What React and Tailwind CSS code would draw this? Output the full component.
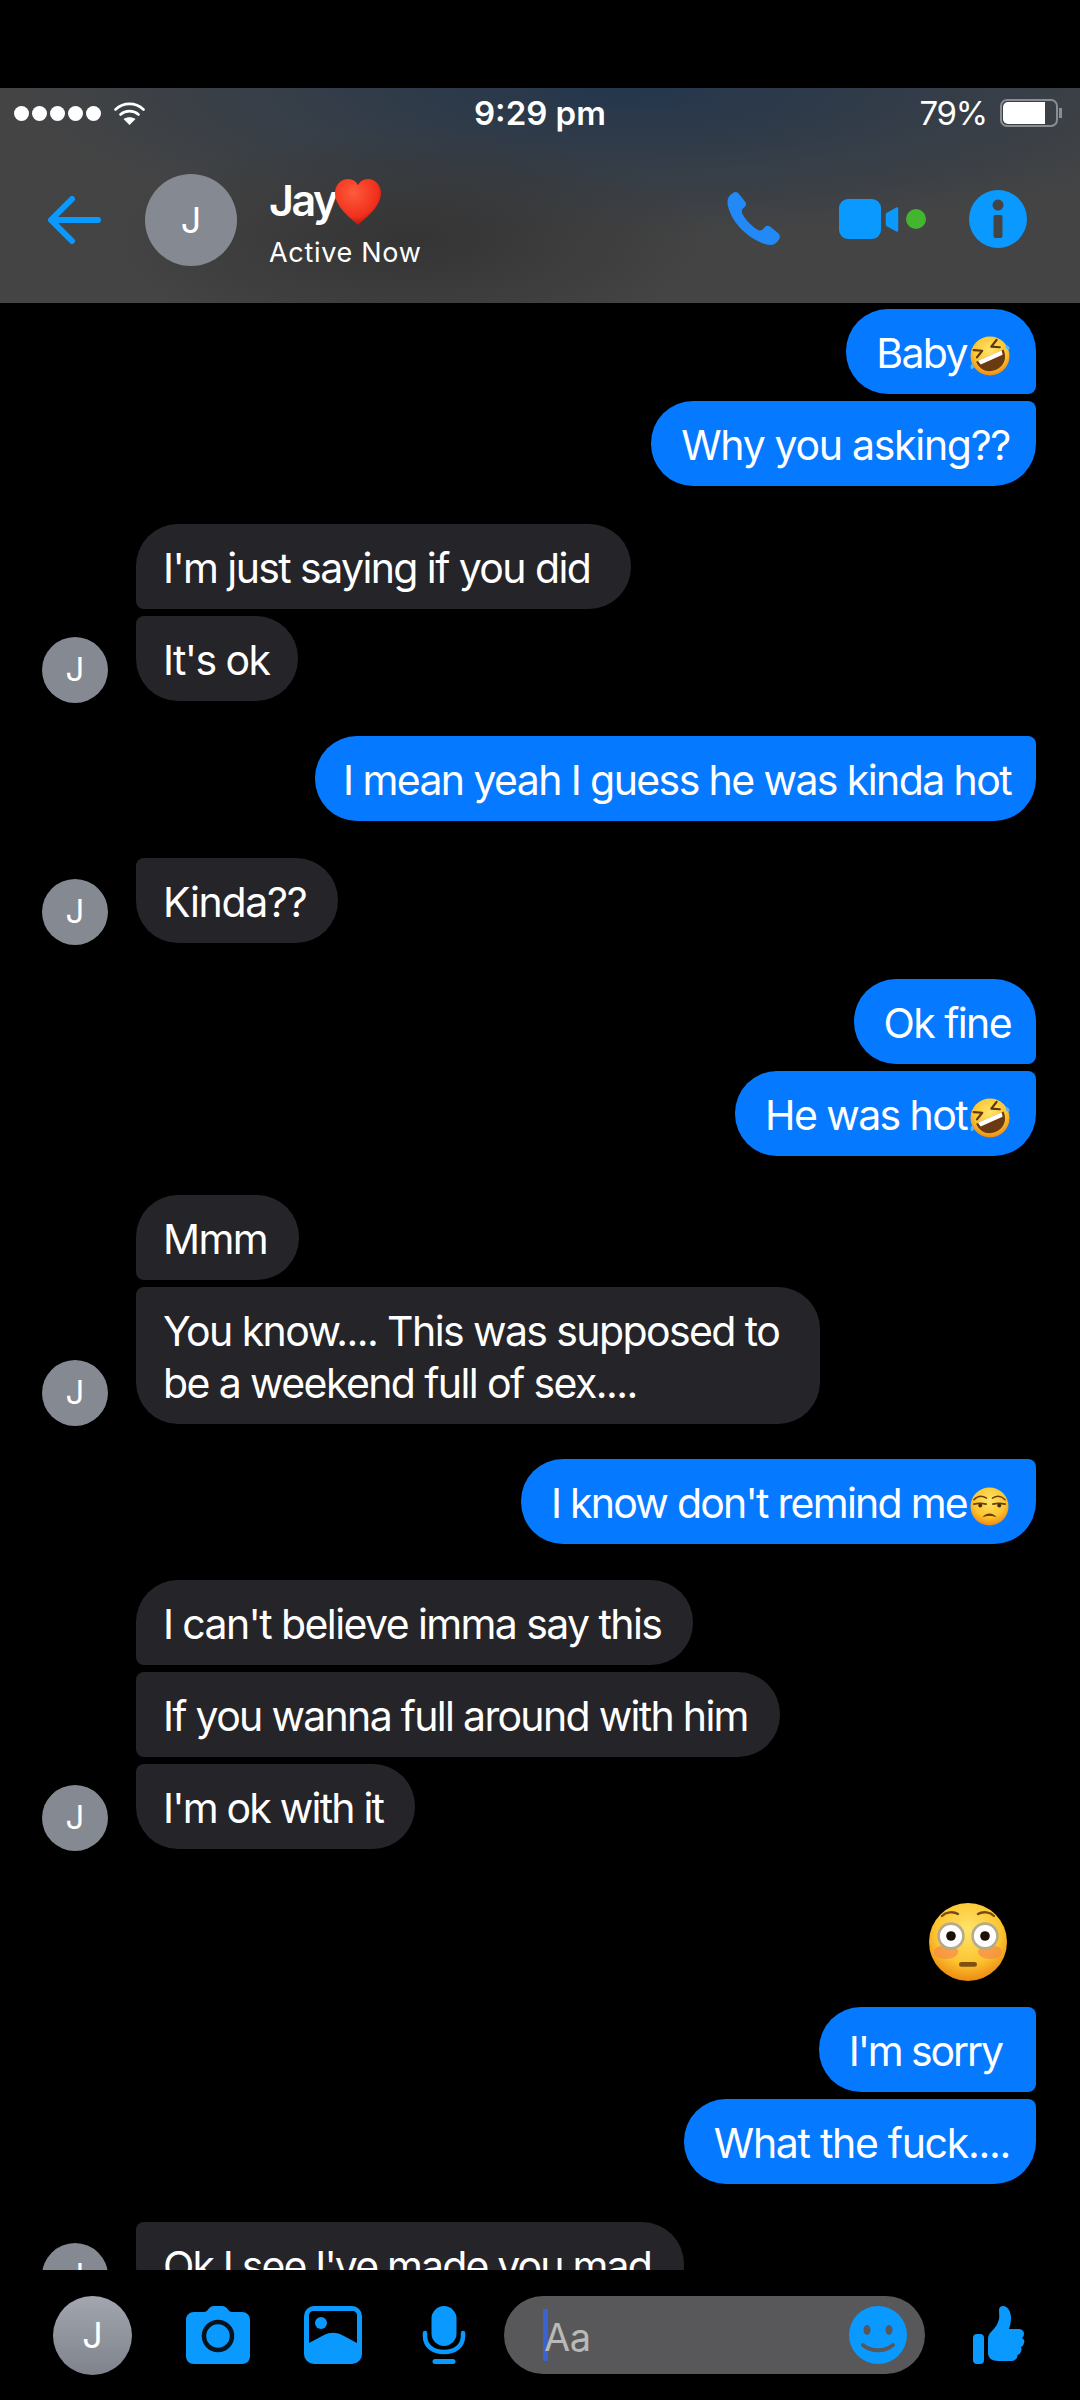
import React from 'react';

const font = "font-['Inter','Liberation_Sans',sans-serif]";

// Emoji are drawn since no colour emoji font is installed
const Face = ({ id, children, size = 40, className = '' }) => (
  <svg viewBox="0 0 40 40" width={size} height={size} className={`inline-block shrink-0 ${className}`}>
    <defs>
      <radialGradient id={id} cx="50%" cy="35%" r="65%">
        <stop offset="0%" stopColor="#ffe46b" />
        <stop offset="65%" stopColor="#fcc52f" />
        <stop offset="100%" stopColor="#ee8a12" />
      </radialGradient>
    </defs>
    <circle cx="20" cy="20" r="19.500" fill={`url(#${id})`} />
    {children}
  </svg>
);

const Rofl = ({ id }) => (
  <Face id={id} className="align-[-8px] ml-[3px]">
    <g transform="rotate(-24 20 20)">
      <path d="M5 19.500h30c0 10-7 15.500-15 15.500S5 29.500 5 19.500z" fill="#6b3a10" />
      <path d="M7 19.500h26l-1 4.500H8z" fill="#fff" />
      <path d="M7.500 8l7.500 4-7.500 4M32.500 8l-7.500 4 7.500 4" fill="none" stroke="#5f3610" strokeWidth="2.200" strokeLinecap="round" strokeLinejoin="round" />
    </g>
    <path d="M36 9c3 .5 4 2.500 3.500 4.500-2.500.5-4.500-1-3.500-4.500zM3 27c-2.500 1.500-3 4-2 6 2.500 0 4.500-2 2-6z" fill="#5fb4ee" />
  </Face>
);

const Unamused = ({ id }) => (
  <Face id={id} size={39} className="align-[-8px] ml-[3px]">
    <path d="M4 13c4-4 9-4 13-1.500M23 11.500c4-2.500 9-2.500 13 1.500" fill="none" stroke="#6b3c0e" strokeWidth="1.500" strokeLinecap="round" />
    <path d="M4 17.500c4-1 8-1 12.500 0M23.500 17.500c4-1 8-1 12.500 0" fill="none" stroke="#6b3c0e" strokeWidth="1.800" strokeLinecap="round" />
    <circle cx="10.500" cy="19" r="2" fill="#4b2a0c" />
    <circle cx="30" cy="19" r="2" fill="#4b2a0c" />
    <path d="M13 31c3-5 11-5 14 0-4-1.800-10-1.800-14 0z" fill="#6b3c0e" />
  </Face>
);

const Flushed = () => (
  <Face id="flushed" size={80}>
    <ellipse cx="9" cy="25" rx="6" ry="3.500" fill="#f58a4a" opacity="0.7" />
    <ellipse cx="31" cy="25" rx="6" ry="3.500" fill="#f58a4a" opacity="0.7" />
    <path d="M7 7c2-2 5.500-2.500 8-1M25 6c2.500-1.500 6-1 8 1" fill="none" stroke="#7a4a12" strokeWidth="1.200" strokeLinecap="round" />
    <circle cx="11.500" cy="17" r="6.200" fill="#fff" stroke="#b5ab8c" strokeWidth="1.300" />
    <circle cx="11.500" cy="17" r="2.400" fill="#1c1208" />
    <circle cx="28.500" cy="17" r="6.200" fill="#fff" stroke="#b5ab8c" strokeWidth="1.300" />
    <circle cx="28.500" cy="17" r="2.400" fill="#1c1208" />
    <rect x="15.500" y="30" width="9" height="2.400" rx="1.200" fill="#80500f" />
  </Face>
);

const Heart = () => (
  <svg viewBox="0 0 48 46" width="48" height="46" className="shrink-0 -ml-[2px] mt-[5px]">
    <defs>
      <radialGradient id="heart" cx="40%" cy="30%" r="75%">
        <stop offset="0%" stopColor="#ff5a3c" />
        <stop offset="70%" stopColor="#f0301c" />
        <stop offset="100%" stopColor="#a81208" />
      </radialGradient>
    </defs>
    <path d="M24 46C14 37 1 27 1 14 1 6 7 0 14 0c4.500 0 8 2 10 6 2-4 5.500-6 10-6 7 0 13 6 13 14 0 13-13 23-23 32z" fill="url(#heart)" />
  </svg>
);

const Avatar = ({ size = 'w-[66px] h-[66px] text-[33px]', tone = 'bg-[#858992]' }) => (
  <div className={`rounded-full flex items-center justify-center text-white shrink-0 ${size} ${tone}`}>J</div>
);

const Bubble = ({ m, mine }) => (
  <div className={`${mine ? 'bg-[#0579ff]' : 'bg-[#252429]'} pt-[18px] pb-[15px] text-[41px] leading-[52px] ${m.track || 'tracking-[-1.6px]'} text-white whitespace-nowrap ${m.cls}`}>
    {m.lines ? m.lines.map((l) => <div key={l}>{l}</div>) : m.text}
    {m.emoji}
  </div>
);

// mt = gap above, one entry per bubble / group
const groups = [
  { mine: true, mt: 'mt-[6px]', items: [
    { text: 'Baby', emoji: <Rofl id="rofl1" />, cls: 'rounded-[42px] rounded-br-[8px] pl-[30px] pr-[26px]' },
    { text: 'Why you asking??', track: 'tracking-[-1.3px]', cls: 'rounded-[42px] rounded-tr-[8px] pl-[30px] pr-[26px]' },
  ] },
  { mt: 'mt-[38px]', items: [
    { text: "I'm just saying if you did", cls: 'rounded-[42px] rounded-bl-[8px] pl-[27px] pr-[41px]' },
    { text: "It's ok", cls: 'rounded-[42px] rounded-tl-[8px] pl-[27px] pr-[29px]' },
  ] },
  { mine: true, mt: 'mt-[35px]', items: [
    { text: 'I mean yeah I guess he was kinda hot', cls: 'rounded-[42px] rounded-tr-[8px] pl-[28px] pr-[25px]' },
  ] },
  { mt: 'mt-[37px]', items: [
    { text: 'Kinda??', track: 'tracking-[-1.3px]', cls: 'rounded-[42px] rounded-tl-[8px] pl-[27px] pr-[32px]' },
  ] },
  { mine: true, mt: 'mt-[36px]', items: [
    { text: 'Ok fine', cls: 'rounded-[42px] rounded-br-[8px] pl-[30px] pr-[25px]' },
    { text: 'He was hot', emoji: <Rofl id="rofl2" />, cls: 'rounded-[42px] rounded-tr-[8px] pl-[30px] pr-[26px]' },
  ] },
  { mt: 'mt-[39px]', items: [
    { text: 'Mmm', cls: 'rounded-[42px] rounded-bl-[8px] pl-[27px] pr-[32px]' },
    { lines: ['You know.... This was supposed to', 'be a weekend full of sex....'], cls: 'rounded-[42px] rounded-tl-[8px] pl-[27px] pr-[41px]' },
  ] },
  { mine: true, mt: 'mt-[35px]', items: [
    { text: "I know don't remind me", track: 'tracking-[-1.75px]', emoji: <Unamused id="unamused" />, cls: 'rounded-[42px] rounded-tr-[8px] pl-[30px] pr-[27px]' },
  ] },
  { mt: 'mt-[36px]', items: [
    { text: "I can't believe imma say this", cls: 'rounded-[42px] rounded-bl-[8px] pl-[27px] pr-[32px]' },
    { text: 'If you wanna full around with him', track: 'tracking-[-1.7px]', cls: 'rounded-[42px] rounded-l-[8px] pl-[27px] pr-[32px]' },
    { text: "I'm ok with it", track: 'tracking-[-1.8px]', cls: 'rounded-[42px] rounded-tl-[8px] pl-[27px] pr-[32px]' },
  ] },
];

const MessageGroup = ({ g }) => (
  <div className={`flex ${g.mt} ${g.mine ? 'justify-end pr-[44px]' : 'pl-[42px] items-end gap-[28px]'}`}>
    {!g.mine && <div className="-mb-[2px]"><Avatar /></div>}
    <div className={`flex flex-col gap-[7px] ${g.mine ? 'items-end' : 'items-start'}`}>
      {g.items.map((m) => <Bubble key={m.text || m.lines[0]} m={m} mine={g.mine} />)}
    </div>
  </div>
);

const StatusBar = () => (
  <div className="h-[50px] flex items-center relative text-white">
    <div className="flex gap-[3px] pl-[14px]">
      {[0, 1, 2, 3, 4].map((i) => <span key={i} className="w-[15px] h-[15px] rounded-full bg-white" />)}
    </div>
    <svg viewBox="0 0 30 25" width="31" height="25" className="ml-[13px]">
      <path d="M1 8.500C9 1 21 1 29 8.500M6 13.500c5-4.500 13-4.500 18 0" fill="none" stroke="#fff" strokeWidth="2.600" strokeLinecap="round" />
      <path d="M15 24l-6-6c3.500-2.500 8.500-2.500 12 0z" fill="#fff" />
    </svg>
    <div className="absolute left-[474px] top-[5px] text-[33px] leading-[40px] font-semibold">9:29 pm</div>
    <div className="ml-auto flex items-center pr-[18px]">
      <span className="text-[33px] leading-[40px] tracking-[-1.2px]">79%</span>
      <div className="ml-[13px] w-[58px] h-[28px] rounded-[7px] border-2 border-[#8a8d90] p-[1px]">
        <div className="w-[42px] h-full rounded-l-[5px] bg-white" />
      </div>
      <span className="ml-[1px] w-[3px] h-[10px] bg-[#8a8d90]" />
    </div>
  </div>
);

const NavBar = () => (
  <div className="flex-1 flex items-center -mt-[1px]">
    <svg viewBox="0 0 53 48" width="53" height="48" className="ml-[48px]">
      <path d="M50 24H4M24 3 3 24l21 21" fill="none" stroke="#0a99ff" strokeWidth="6" strokeLinecap="round" strokeLinejoin="round" />
    </svg>
    <Avatar size="w-[92px] h-[92px] text-[36px] ml-[44px]" />
    <div className="ml-[32px] text-white">
      <div className="flex items-center h-[50px] mt-[3px]">
        <span className="text-[43px] leading-[50px] font-semibold tracking-[-2.5px]">Jay</span>
        <Heart />
      </div>
      <div className="text-[27px] leading-[32px] tracking-[0.7px] mt-[12px]">Active Now</div>
    </div>
    <svg viewBox="0 0 53 53" width="53" height="53" className="ml-auto -mt-[4px]">
      <path d="M6 1C8-.5 10 0 11.500 1.500L18 9.500c1.500 2 1.500 3.500 0 5L15.500 17c-1 1.500-1 3 0 5 3.500 6.500 9.500 12.500 15.500 16 2 1 3.500.5 4.500-.5L38 35c1.500-1.500 3-1.500 5-.5l8 6.500c2 2 2.500 4 1 6.500-2 3.500-5 5.500-8.500 5.500C30 52 6 36 1 14-.5 8 1 4 6 1z" fill="#2389f7" />
    </svg>
    <div className="ml-[59px] flex items-center -mt-[2px]">
      <div className="w-[42px] h-[40px] rounded-[9px] bg-[#0a99ff]" />
      <svg viewBox="0 0 13 26" width="14" height="25" className="ml-[4px]">
        <path d="M0 8c0-1 .5-1.500 1-2l10-5.500C12 0 13 .500 13 2v22c0 1.500-1 2-2 1.500L1 20c-.5-.5-1-1-1-2z" fill="#0a99ff" />
      </svg>
      <div className="ml-[7px] w-[20px] h-[20px] rounded-full bg-[#43b52f]" />
    </div>
    <svg viewBox="0 0 58 58" width="58" height="58" className="ml-[43px] mr-[53px] -mt-[2px]">
      <circle cx="29" cy="29" r="29" fill="#0a99ff" />
      <circle cx="29" cy="15" r="5.500" fill="#444" />
      <rect x="24.500" y="25" width="9" height="23" rx="2" fill="#444" />
    </svg>
  </div>
);

const Composer = () => (
  <div className="h-[130px] bg-black flex items-center">
    <Avatar size="w-[79px] h-[79px] text-[36px] ml-[53px]" tone="bg-gradient-to-b from-[#a2a6ae] to-[#7f838b]" />
    <svg viewBox="0 0 64 58" width="66" height="58" className="ml-[53px]">
      <path d="M8 6h10c2 0 3-1 4-2.500C23.500 1 26 0 28 0h8c2 0 4.500 1 6 3.500C43 5 44 6 46 6h10c4.500 0 8 3 8 8v36c0 5-3.500 8-8 8H8c-4.500 0-8-3-8-8V14c0-5 3.500-8 8-8z" fill="#0a99ff" />
      <circle cx="32" cy="30" r="14" fill="#0a99ff" stroke="#06121c" strokeWidth="4.500" />
    </svg>
    <svg viewBox="0 0 58 58" width="58" height="58" className="ml-[53px]">
      <rect width="58" height="58" rx="10" fill="#0a99ff" />
      <path d="M5 9c0-2 2-4 4-4h40c2 0 4 2 4 4v28l-15-8c-6-3-12-3-18 0L5 37z" fill="#000" />
      <circle cx="17" cy="17" r="6" fill="#0a99ff" />
    </svg>
    <svg viewBox="0 0 44 58" width="44" height="58" className="ml-[60px]">
      <rect x="9.500" y="0" width="25" height="40" rx="12.500" fill="#0a99ff" />
      <path d="M3 27v3c0 10 8 16 19 16s19-6 19-16v-3" fill="none" stroke="#0a99ff" strokeWidth="4.500" strokeLinecap="round" />
      <rect x="10.500" y="53" width="23" height="5" rx="2.500" fill="#0a99ff" />
    </svg>
    <div className="ml-[38px] w-[421px] h-[78px] rounded-full bg-[#58585a] flex items-center">
      <span className="ml-[39px] w-[5px] h-[52px] bg-[#3a62d0]" />
      <span className="-ml-[4px] text-[38px] leading-[52px] pt-[4px] text-[#b9b9b9] tracking-[-0.5px]">Aa</span>
      <svg viewBox="0 0 58 58" width="58" height="58" className="ml-auto mr-[18px]">
        <circle cx="29" cy="29" r="29" fill="#0a99ff" />
        <ellipse cx="18" cy="24" rx="3.500" ry="5" fill="#58585a" />
        <ellipse cx="40" cy="24" rx="3.500" ry="5" fill="#58585a" />
        <path d="M14 39c8 7 22 7 30 0" fill="none" stroke="#58585a" strokeWidth="4" strokeLinecap="round" />
      </svg>
    </div>
    <svg viewBox="0 0 52 58" width="56" height="58" className="ml-[46px]">
      <rect x="0" y="28" width="11" height="30" rx="4" fill="#0a99ff" />
      <path d="M15 33c0-3 1-5 3-7 4-4 7-8 8-13 .5-3 0-6 0-9 0-3 2-4 4-4 5 0 8 6 8 12 0 4-1 8-2 11h9c4 0 6 2 6 5 0 2-1 3-2 4 2 1 3 3 2 5-.5 2-1 3-3 4 1 2 .5 4-.5 5.500-.5 1-1.500 2-3 2.500 0 4-3 6-7 6H25c-6 0-10-3-10-8z" fill="#0a99ff" />
    </svg>
  </div>
);

export default function App() {
  return (
    <div className={`w-[1080px] h-[2400px] bg-black flex flex-col overflow-hidden ${font}`}>
      <div className="h-[88px] shrink-0" />
      <div className="h-[215px] shrink-0 flex flex-col bg-[#444444] bg-[radial-gradient(ellipse_300px_110px_at_38%_70%,#343434_0%,#34343400_100%),radial-gradient(ellipse_620px_150px_at_58%_0%,#24364c_0%,#24364c00_100%)]">
        <StatusBar />
        <NavBar />
      </div>
      <div className="flex-1 overflow-hidden">
        {groups.map((g) => <MessageGroup key={g.items[0].text || g.items[0].lines[0]} g={g} />)}
        <div className="flex justify-end pr-[72px] mt-[53px]"><Flushed /></div>
        <MessageGroup g={{ mine: true, mt: 'mt-[25px]', items: [
          { text: "I'm sorry", track: 'tracking-[-2.1px]', cls: 'rounded-[42px] rounded-r-[8px] pl-[30px] pr-[34px]' },
          { text: 'What the fuck....', track: 'tracking-[-1.3px]', cls: 'rounded-[42px] rounded-tr-[8px] pl-[30px] pr-[26px]' },
        ] }} />
        <MessageGroup g={{ mt: 'mt-[38px]', items: [
          { text: "Ok I see I've made you mad", track: 'tracking-[-1.85px]', cls: 'rounded-[42px] rounded-tl-[8px] pl-[27px] pr-[33px]' },
        ] }} />
      </div>
      <Composer />
    </div>
  );
}
